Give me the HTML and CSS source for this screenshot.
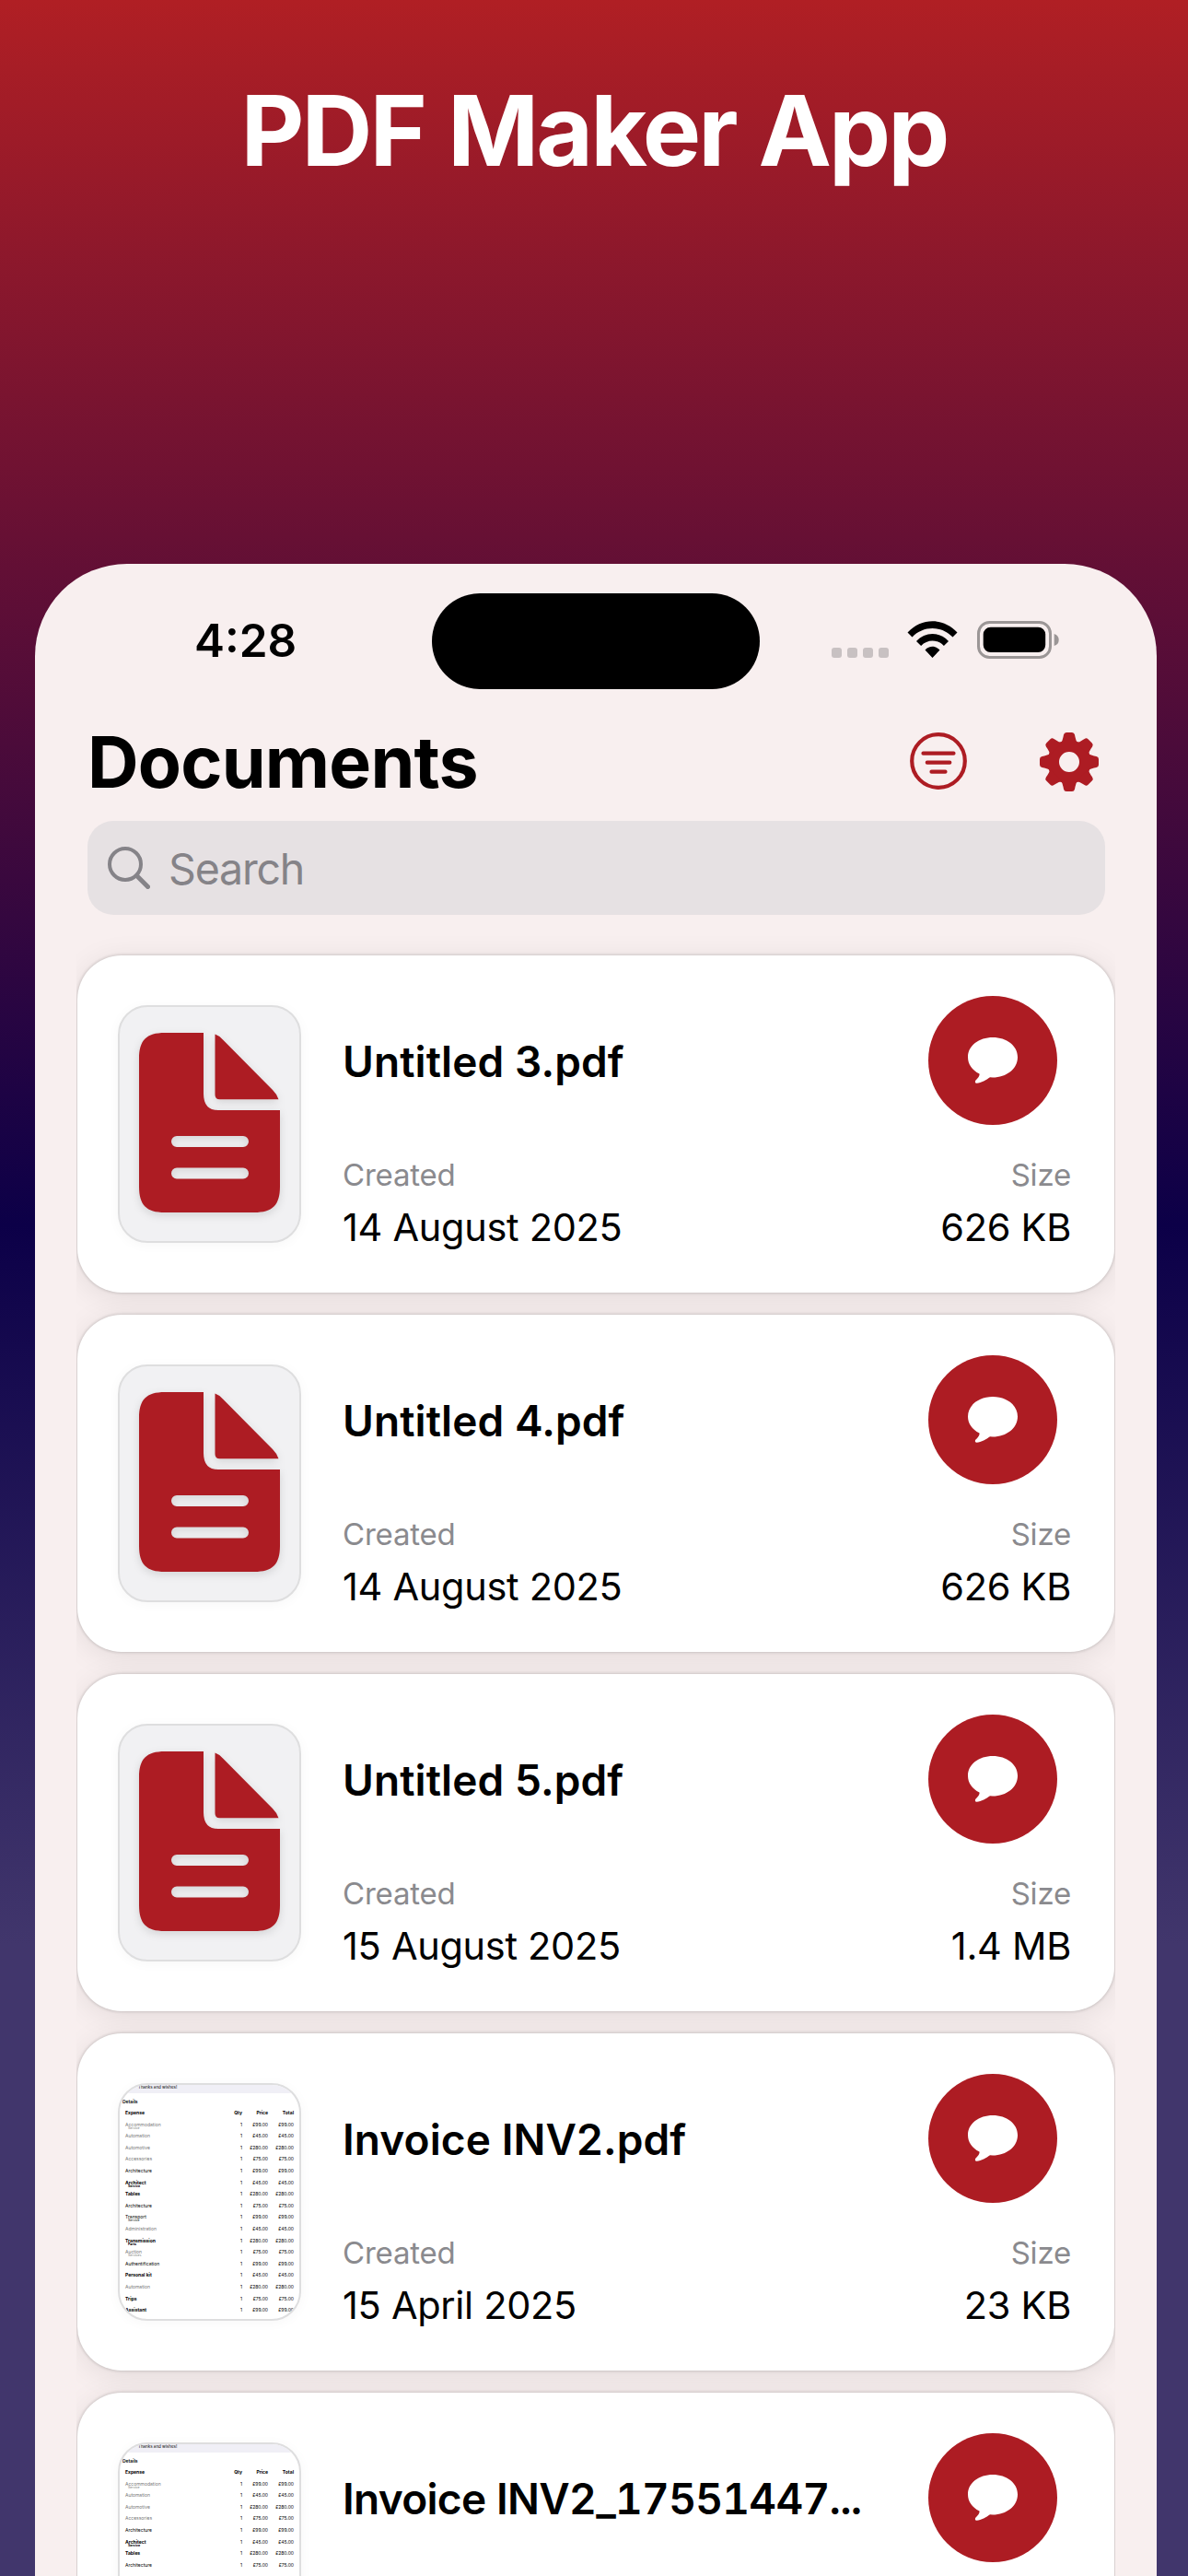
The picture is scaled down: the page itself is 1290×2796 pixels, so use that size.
FILE: index.html
```html
<!DOCTYPE html>
<html lang="en">
<head>
<meta charset="utf-8">
<title>PDF Maker App</title>
<link rel="stylesheet" href="styles.css">
</head>
<body>
<svg class="defs" aria-hidden="true">
  <symbol id="doc" viewBox="0 0 153 195">
    <path d="M28 0H70V66Q70 84 86 84H153V167C153 187 145 195 125 195H28C8 195 0 187 0 167V28C0 8 8 0 28 0ZM41 112a6 6 0 0 0 0 12h72a6 6 0 0 0 0-12ZM41 146.500a6 6 0 0 0 0 12h72a6 6 0 0 0 0-12Z"/>
    <path d="M82.500 1.500Q87 3 91 7.500L145 62Q150 67 151.500 72.300H87.500Q82.500 72.300 82.500 67.300Z"/>
  </symbol>
  <symbol id="bubble" viewBox="0 0 54 50">
    <path d="M27 0C42 0 54 9 54 21.500S42 43.500 27 43.500L24 43.300C20 46 14.500 49.700 9.500 49.700C7.500 49.700 7.500 47.800 8.500 46.500C10.500 44.500 13 42 12.500 39.500C4.500 35.500 0 29 0 21.500C0 9 12 0 27 0Z"/>
  </symbol>
</svg>
<h1 class="headline">PDF Maker App</h1>
<main class="phone">
  <header class="status">
    <div class="time">4:28</div>
    <div class="island"></div>
    <div class="indicators">
      <span class="dots"><i></i><i></i><i></i><i></i></span>
      <svg class="wifi" viewBox="0 0 54 40"><path d="M0 12.600C15-3.800 39-3.800 54 12.600L49 17.600C37 4.900 17 4.900 5 17.600ZM9.500 22C19 11.200 35 11.200 44.500 22L39.400 27C32.500 19.600 21.500 19.600 14.600 27ZM19 31.500C23.500 26.500 30.500 26.500 35 31.500L27 40Z"/></svg>
      <svg class="battery" viewBox="0 0 90 41"><rect x="1.500" y="1.500" width="78" height="38" rx="12" fill="none" stroke="#9b9696" stroke-width="3"/><rect x="6.700" y="6.700" width="67.500" height="27.400" rx="8"/><path d="M83.700 14q5 1.500 5 6.500t-5 6.500z" fill="#9b9696"/></svg>
    </div>
  </header>
  <div class="bar">
    <h2>Documents</h2>
    <svg class="filter" viewBox="0 0 62 62"><g fill="none" stroke="#ad1c23" stroke-width="4.200" stroke-linecap="round"><circle cx="31" cy="31" r="28.800"/><path d="M14.500 22.700h33M18.800 32.700h24.500M23.500 42.700h15"/></g></svg>
    <svg class="gear" viewBox="-32 -32 64 64"><g fill="#ad1c23"><path fill-rule="evenodd" d="M0-23.500A23.500 23.500 0 1 0 0 23.500A23.500 23.500 0 1 0 0-23.500ZM0-11A11 11 0 1 1 0 11A11 11 0 1 1 0-11Z"/><g id="t"><path id="tooth" d="M-10-20Q-7-22.500-6.500-27L-6-29.500Q-5.500-32-3-32H3Q5.500-32 6-29.500L6.500-27Q7-22.500 10-20Z"/><use href="#tooth" transform="rotate(45)"/><use href="#tooth" transform="rotate(90)"/><use href="#tooth" transform="rotate(135)"/></g><use href="#t" transform="rotate(180)"/></g></svg>
  </div>
  <div class="search">
    <svg viewBox="0 0 46 46"><g fill="none" stroke="#858388" stroke-width="4"><circle cx="19" cy="19" r="17"/><path d="M31.500 31.500L43.500 43.500" stroke-width="5" stroke-linecap="round"/></g></svg>
    <span>Search</span>
  </div>
  <section class="list" id="list"></section>
</main>
<script src="list.js"></script>
</body>
</html>
```

FILE: styles.css
```css
* { box-sizing: border-box; }
body {
  margin: 0;
  width: 1290px;
  height: 2796px;
  overflow: hidden;
  font-family: Inter, "Liberation Sans", sans-serif;
  color: #000;
  background: linear-gradient(180deg, #b01f24 0, #620f35 620px, #0c0048 1330px, #41366c 2110px, #41366c 100%);
}
.defs { display: none; }
.headline {
  margin: 0;
  height: 612px;
  padding-top: 77px;
  text-align: center;
  color: #fff;
  font-size: 106.500px;
  line-height: 129px;
  font-weight: 700;
  letter-spacing: -2.900px;
  word-spacing: 2.500px;
}
.phone {
  width: 1218px;
  height: 2184px;
  margin-left: 38px;
  border-radius: 100px 100px 0 0;
  background: #f8efef;
  overflow: hidden;
}
.status { display: flex; height: 178px; padding-top: 32px; }
.time {
  width: 431px;
  padding: 21px 0 0 173px;
  font-size: 49.500px;
  line-height: 60px;
  font-weight: 600;
  white-space: nowrap;
}
.island { width: 356px; height: 104px; border-radius: 52px; background: #000; }
.indicators { display: flex; padding: 29.500px 0 0 78px; }
.dots { display: flex; gap: 6px; margin: 29px 20px 0 0; }
.dots i { width: 11px; height: 11px; border-radius: 3px; background: #c8c1c2; }
.wifi { width: 55px; height: 40px; margin-right: 21px; }
.battery { width: 90px; height: 41px; }
.bar { display: flex; height: 101px; padding-left: 57px; }
.bar h2 {
  width: 893px;
  margin: -9px 0 0;
  font-size: 77px;
  line-height: 93px;
  font-weight: 700;
  letter-spacing: -0.800px;
}
.filter { width: 62px; height: 62px; margin: 5px 79px 0 0; }
.gear { width: 64px; height: 64px; margin-top: 5px; }
.search {
  display: flex;
  align-items: center;
  width: 1105px;
  height: 102px;
  margin-left: 57px;
  padding-left: 22px;
  border-radius: 28px;
  background: #e6e1e3;
  color: #858388;
  font-size: 46.500px;
  letter-spacing: -1.200px;
}
.search svg { width: 46px; height: 46px; margin-right: 20px; }
.search span { padding-top: 2px; }
.list {
  display: flex;
  flex-direction: column;
  gap: 24px;
  width: 1128px;
  height: 1803px;
  margin-left: 45px;
  padding: 44px 1px 0;
  overflow: hidden;
}
.card {
  display: flex;
  flex: none;
  height: 366px;
  padding-left: 44px;
  border-radius: 48px;
  background: #fff;
  box-shadow: 0 0 3px 1px rgba(0,0,0,.14), 0 5px 32px rgba(0,0,0,.085);
}
.thumb {
  width: 199px;
  height: 258px;
  margin: 54px 45px 0 0;
  border: 2px solid #dededf;
  border-radius: 32px;
  background: #f1f1f3;
  overflow: hidden;
  box-shadow: 0 2px 14px rgba(0,0,0,.035);
}
.thumb > svg { display: block; width: 153px; height: 195px; margin: 28px 0 0 21px; fill: #ad1c23; filter: drop-shadow(0 3px 5px rgba(0,0,0,.12)); }
.info { width: 602px; padding-top: 87px; }
.name { font-size: 46px; line-height: 56px; font-weight: 600; letter-spacing: .1px; white-space: nowrap; }
.name.numbered { font-variant-numeric: tabular-nums; letter-spacing: -.7px; }
.label { font-size: 33px; line-height: 40px; color: #8a8a8e; letter-spacing: -.2px; }
.value { font-size: 41.500px; line-height: 50px; letter-spacing: -.3px; white-space: nowrap; }
.info .label { margin-top: 75px; }
.info .value, .side .value { margin-top: 12px; }
.side { display: flex; flex-direction: column; align-items: flex-end; width: 189px; padding-top: 44px; }
.chat { display: grid; place-items: center; width: 140px; height: 140px; margin-right: 15px; border-radius: 50%; background: #ad1c23; }
.chat svg { width: 54px; height: 50px; fill: #fff; }
.side .label { margin-top: 34px; }
.page { background: #fff; }
.page-top { height: 9px; padding-left: 20px; background: #f0eff6; font-size: 4.500px; line-height: 5px; }
.page h3 { margin: 6px 0 5px 3px; font-size: 5px; line-height: 7px; font-weight: 600; }
.line { display: grid; grid-template-columns: 111px 16px 28px 28px; padding-left: 6px; height: 12.600px; font-size: 5px; line-height: 6px; text-align: right; white-space: nowrap; }
.line span:first-child { text-align: left; }
.line.strong span:first-child, .line.head { font-weight: 700; }
.line.light span:first-child { color: #777; }
.line small { display: block; padding-left: 3px; font-size: 3.500px; line-height: 3px; }
```

FILE: list.js
```js
const documents = [
  { name: "Untitled 3.pdf", date: "14 August 2025", size: "626 KB" },
  { name: "Untitled 4.pdf", date: "14 August 2025", size: "626 KB" },
  { name: "Untitled 5.pdf", date: "15 August 2025", size: "1.4 MB" },
  { name: "Invoice INV2.pdf", date: "15 April 2025", size: "23 KB", rows: 17 },
  { name: "Invoice INV2_17551447...", rows: 8 }
];
const lines = [
  ["Accommodation", "Service", "light"], ["Automation", "", "light"], ["Automotive", "", "light"],
  ["Accessories", "", "light"], ["Architecture", "", ""], ["Architect", "Service", "strong"],
  ["Tables", "", "strong"], ["Architecture", "", ""], ["Transport", "Service", ""],
  ["Administration", "", "light"], ["Transmission", "Parts", "strong"], ["Auction", "Services", "light"],
  ["Authentification", "", ""], ["Personal kit", "", "strong"], ["Automation", "", "light"],
  ["Trips", "", "strong"], ["Assistant", "", "strong"]
];
const prices = ["£99.00", "£45.00", "£280.00", "£75.00"];
const page = rows => `<div class="page-top">Thanks and wishes!</div><h3>Details</h3>
<div class="line head"><span>Expense</span><span>Qty</span><span>Price</span><span>Total</span></div>` +
  lines.slice(0, rows).map(([name, note, tone], i) => {
    const price = prices[i % prices.length];
    return `<div class="line ${tone}"><span>${name}${note ? `<small>${note}</small>` : ""}</span><span>1</span><span>${price}</span><span>${price}</span></div>`;
  }).join("");
const field = (label, value) => value ? `<div class="label">${label}</div><div class="value">${value}</div>` : "";
document.getElementById("list").innerHTML = documents.map(({ name, date, size, rows }) => `
<article class="card">
  <div class="thumb${rows ? " page" : ""}">${rows ? page(rows) : '<svg><use href="#doc"/></svg>'}</div>
  <div class="info"><div class="name${date ? "" : " numbered"}">${name}</div>${field("Created", date)}</div>
  <div class="side"><div class="chat"><svg><use href="#bubble"/></svg></div>${field("Size", size)}</div>
</article>`).join("");
```
